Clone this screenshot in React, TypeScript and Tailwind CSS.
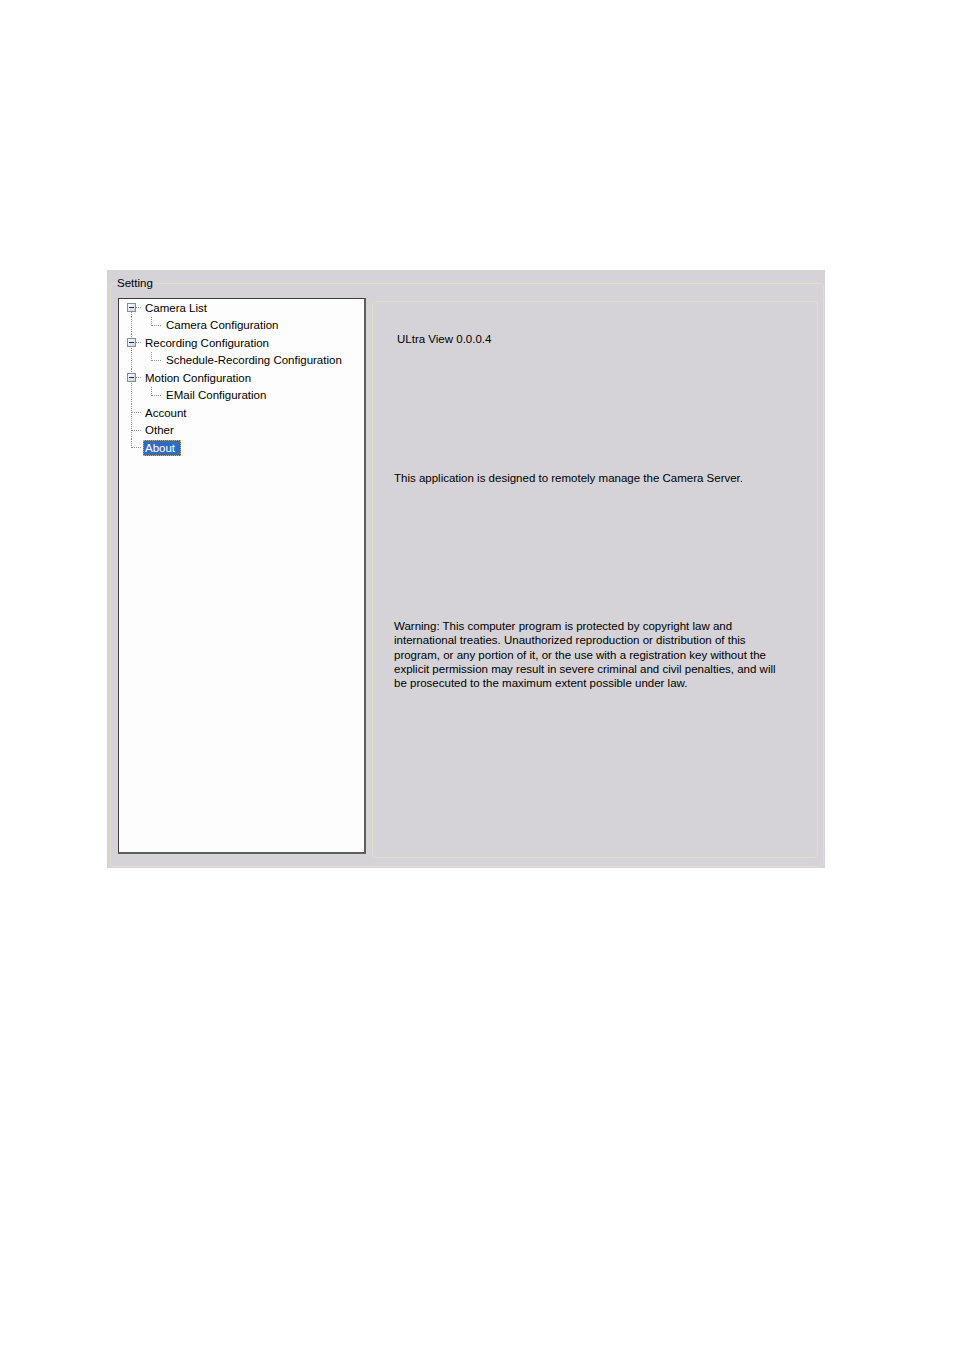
import React from "react";

type Node = { label: string; level: 0 | 1; box?: boolean; first?: boolean; last?: boolean; selected?: boolean };

const nodes: Node[] = [
  { label: "Camera List", level: 0, box: true, first: true },
  { label: "Camera Configuration", level: 1 },
  { label: "Recording Configuration", level: 0, box: true },
  { label: "Schedule-Recording Configuration", level: 1 },
  { label: "Motion Configuration", level: 0, box: true },
  { label: "EMail Configuration", level: 1 },
  { label: "Account", level: 0 },
  { label: "Other", level: 0 },
  { label: "About", level: 0, last: true, selected: true },
];

const DOT = "#909090";

function Connector({ n }: { n: Node }) {
  const w = n.level === 0 ? 24 : 45;
  const h = 17.5;
  const y1 = n.first ? 8.5 : 0;
  const y2 = n.last ? 9 : h;
  return (
    <svg width={w} height={h} viewBox={`0 0 ${w} ${h}`} className="shrink-0" shapeRendering="crispEdges">
      <line x1={12.5} y1={y1} x2={12.5} y2={y2} stroke={DOT} strokeWidth={1} strokeDasharray="1 1" />
      {n.level === 0 && (
        <line x1={n.box ? 17 : 13} y1={8.5} x2={22} y2={8.5} stroke={DOT} strokeWidth={1} strokeDasharray="1 1" />
      )}
      {n.level === 1 && (
        <>
          <line x1={32.5} y1={0} x2={32.5} y2={8.5} stroke={DOT} strokeWidth={1} strokeDasharray="1 1" />
          <line x1={33} y1={8.5} x2={43} y2={8.5} stroke={DOT} strokeWidth={1} strokeDasharray="1 1" />
        </>
      )}
      {n.box && (
        <>
          <defs>
            <linearGradient id="bx" x1="0" y1="0" x2="1" y2="1">
              <stop offset="0" stopColor="#ffffff" />
              <stop offset="1" stopColor="#c8d0dc" />
            </linearGradient>
          </defs>
          <rect x={8.5} y={4.5} width={8} height={8} fill="url(#bx)" stroke="#7b8ea6" strokeWidth={1} />
          <line x1={10} y1={8.5} x2={15} y2={8.5} stroke="#1c2c4c" strokeWidth={1} />
        </>
      )}
    </svg>
  );
}

export default function App() {
  return (
    <div
      className="min-h-[1351px] w-[954px] bg-white pt-[270px] pl-[107px] text-black"
      style={{ fontFamily: '"Liberation Sans", Arial, sans-serif' }}
    >
      <div className="w-[718px] h-[598px] bg-[#d5d3d7] pt-[7px] pl-[3px]">
        <fieldset className="w-[713px] h-[590px] border border-[#e2dfc6] rounded-[4px] m-0 p-0">
          <legend className="ml-[5px] px-[1px] text-[11.5px] leading-[13px]">Setting</legend>
          <div className="flex gap-[6px] items-start pl-[7px] pr-[5px] pt-[8px]">
            <div className="w-[248px] h-[556px] bg-[#fdfdfd] border-t border-l border-[#3c3c3c] border-r-2 border-b-2 border-r-[#5e5e5e] border-b-[#5e5e5e]">
              {nodes.map((n) => (
                <div key={n.label} className="flex items-center h-[17.5px] text-[11.5px]">
                  <Connector n={n} />
                  {n.selected ? (
                    <span className="h-[16px] leading-[14px] pl-[1px] pr-[5px] bg-[#316ac5] text-white border border-dotted border-[#c9b15a]">
                      {n.label}
                    </span>
                  ) : (
                    <span className="leading-[16px] px-[2px] whitespace-nowrap">{n.label}</span>
                  )}
                </div>
              ))}
            </div>
            <div className="mt-[3px] w-[446px] h-[557px] border border-[#e2dfc6] rounded-[4px] text-[11.5px]">
              <div className="pl-[24px] pt-[31px] leading-[13px]">ULtra View 0.0.0.4</div>
              <div className="pl-[21px] mt-[126px] leading-[13px]">
                This application is designed to remotely manage the Camera Server.
              </div>
              <div className="pl-[21px] mt-[134px] leading-[14.3px] whitespace-nowrap">
                Warning: This computer program is protected by copyright law and
                <br />
                international treaties. Unauthorized reproduction or distribution of this
                <br />
                program, or any portion of it, or the use with a registration key without the
                <br />
                explicit permission may result in severe criminal and civil penalties, and will
                <br />
                be prosecuted to the maximum extent possible under law.
              </div>
            </div>
          </div>
        </fieldset>
      </div>
    </div>
  );
}
